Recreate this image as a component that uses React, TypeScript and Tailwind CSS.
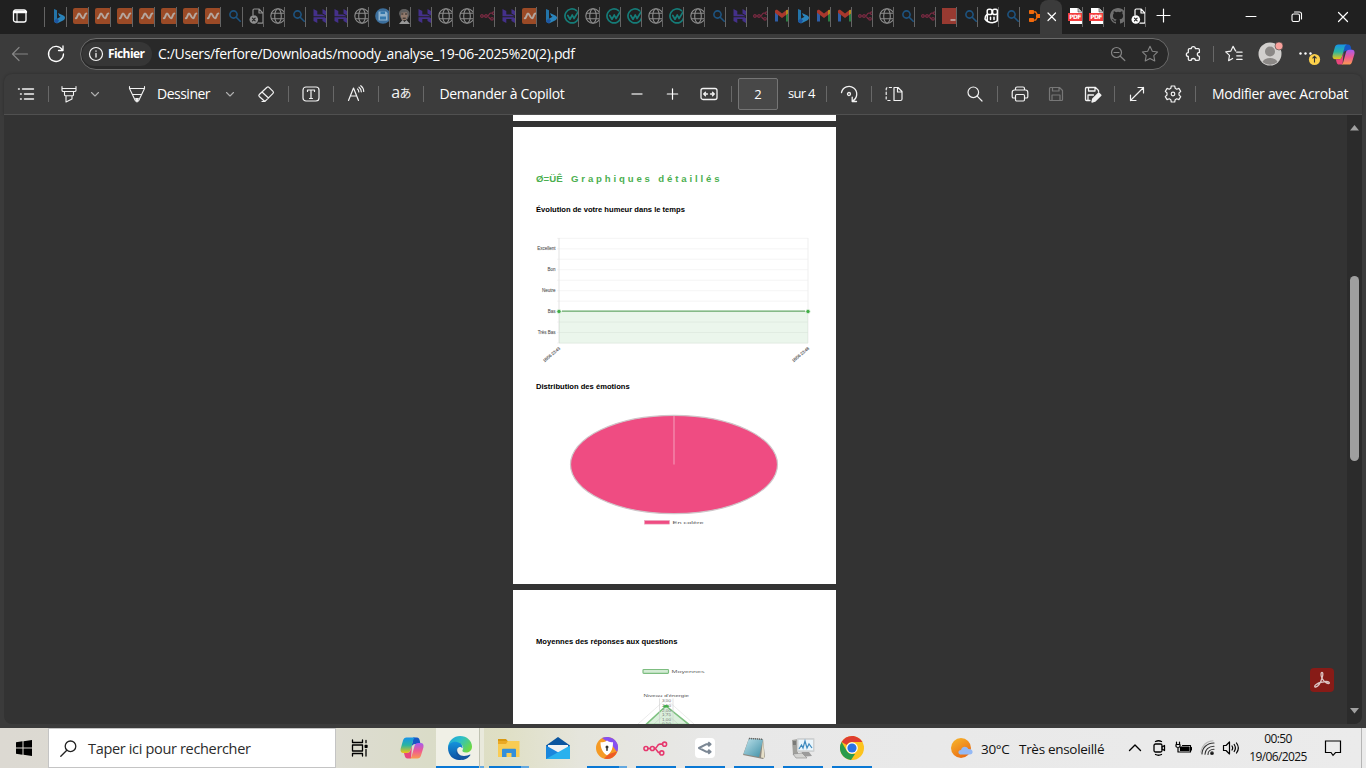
import React from "react";

type P = { children?: React.ReactNode; className?: string; s?: number; w?: number; vb?: string; c?: string };

/* Stroked icon on a 20-unit canvas */
const Ico = ({ children, s = 20, w = 1.2, vb = "0 0 20 20", c = "#f2f2f2", className = "" }: P) => (
  <svg width={s} height={s} viewBox={vb} fill="none" stroke={c} strokeWidth={w} strokeLinecap="round" strokeLinejoin="round" className={`shrink-0 ${className}`}>
    {children}
  </svg>
);

const Cell = ({ children, className = "" }: P) => (
  <div className={`flex h-full shrink-0 items-center justify-center ${className}`}>{children}</div>
);

const Sep = ({ className = "" }: P) => <div className={`h-4 w-px shrink-0 bg-[#686868] ${className}`} />;

/* ---------- tab strip ---------- */

const Bing = () => (
  <svg width="16" height="16" viewBox="0 0 16 16" className="shrink-0">
    <path d="M3 1l3 1.200v8.600L3 13z" fill="#2374a8" />
    <path d="M6 10.800l3.500-2-1.300-.8L7 5l5.300 2.500c1.200.6 1.800 1.500 1.700 2.500-.1 1-.6 1.700-1.500 2.200L7 15c-1.800.8-3.800-.2-4-2.200z" fill="#2a84bb" />
    <path d="M3 12.800l3-2 2 1.400-1.600 3C4.700 15.400 3.200 14.300 3 12.800z" fill="#1d55a0" />
  </svg>
);
const Namecheap = () => (
  <svg width="16" height="16" viewBox="0 0 16 16" className="shrink-0">
    <rect width="16" height="16" rx="2" fill="#9b4a26" />
    <path d="M2.800 10.200C4.500 10.400 4.500 5.600 6 5.600S8.400 10.300 10 10.300 11.500 5.600 13.300 5.600" fill="none" stroke="#b5a79f" strokeWidth="2" strokeLinecap="round" />
  </svg>
);
const Search = () => (
  <Ico s={16} vb="0 0 16 16" w={1.600} c="#1d5380">
    <circle cx="6.500" cy="6.500" r="3.600" />
    <path d="M9.200 9.200l4 4" />
  </Ico>
);
const FileX = ({ c = "#8f8f8f" }: P) => (
  <Ico s={16} vb="0 0 16 16" w={1.200} c={c}>
    <path d="M4 7V2.200C4 1.300 4.500 1 5.200 1H10l4 4v9c0 .700-.400 1.200-1.200 1.200H9M10 1v4h4" />
    <circle cx="4.800" cy="11.500" r="4.300" fill={c} stroke="none" />
    <path d="M3.500 10.200l2.600 2.600M6.100 10.200l-2.600 2.600" stroke="#202020" />
  </Ico>
);
const Globe = () => (
  <Ico s={16} vb="0 0 16 16" w={1.100} c="#8c8c8c">
    <circle cx="8" cy="8" r="7.200" />
    <ellipse cx="8" cy="8" rx="3.300" ry="7.200" />
    <path d="M1.500 5.300h13M1.500 10.700h13" />
  </Ico>
);
const Hosting = () => (
  <svg width="16" height="16" viewBox="0 0 16 16" className="shrink-0" fill="#44308a">
    <path d="M1.500 1l3.800 2v3.400h4.800L13.800 8.300H1.500zM10.500 1l3.500 2v4.400l-3.500-1.800z" />
    <path d="M1.500 9.200h11l1.500 1V15l-3.500-1.900v-2H5.300V15l-3.800-2z" />
  </svg>
);
const Disk = () => (
  <svg width="16" height="16" viewBox="0 0 16 16" className="shrink-0">
    <circle cx="8" cy="8" r="7.800" fill="#3c6f9d" />
    <path d="M3.500 3.500h7.500l1.500 1.500v7.500h-9z" fill="#8fb4d0" />
    <path d="M5.500 3.500h4.500V6H5.500zM5 8.500h6v3H5z" fill="#3679ad" />
  </svg>
);
const Face = () => (
  <svg width="16" height="16" viewBox="0 0 16 16" className="shrink-0">
    <path d="M3 6c0-3 2-5 5.200-5C12 1 14 3.500 13.500 7l-2 4.500-6 .500z" fill="#5e5e5e" />
    <path d="M5 4.800l6-.6.800 3.500L10 12l-3.300.400L5 9z" fill="#927a6c" />
    <path d="M5.300 6h2M9 6h2M6.700 10.200h3" stroke="#252525" />
    <path d="M3 16l3.500-4 2 2 2-2L14 16z" fill="#999" />
  </svg>
);
const N8n = ({ c = "#7a2a42", s = 16, w = 1.200 }: P) => (
  <Ico s={s} vb="0 0 16 16" w={w} c={c}>
    <circle cx="1.900" cy="8" r="1.300" />
    <circle cx="6" cy="8" r="1.300" />
    <circle cx="13.800" cy="5.200" r="1.300" />
    <circle cx="12" cy="10.800" r="1.300" />
    <path d="M3.200 8h1.500M7.300 8c2.300 0 1.300-2.800 3.400-2.800h1.800M7.300 8c2 0 1.300 2.800 3.400 2.800" />
  </Ico>
);
const Wave = () => (
  <Ico s={16} vb="0 0 16 16" w={1.700} c="#157c78">
    <path d="M12.500 2.600A7 7 0 1 0 14.800 9.500" />
    <path d="M3.800 7.500l2.200 3.800L8.300 7 10 10.500 15 2.500" />
  </Ico>
);
const Gmail = () => (
  <svg width="16" height="16" viewBox="0 0 16 16" className="shrink-0">
    <path d="M1 4v9.500h3V6.500z" fill="#2f5ea6" />
    <path d="M12 6.500v7h3V4z" fill="#2a7d41" />
    <path d="M1 3.200C1 1.800 2.500 1.300 3.500 2L8 5.400 12.500 2c1-.7 2.500-.2 2.500 1.200v1.500L8 10 1 4.700z" fill="#a8382d" />
    <path d="M12 2.400c1.500-1 3-.4 3 .8v1.500l-3 2.300z" fill="#b08a20" />
  </svg>
);
const RedSq = () => (
  <svg width="16" height="16" viewBox="0 0 16 16" className="shrink-0">
    <rect width="16" height="16" fill="#983a31" />
    <path d="M8.500 12h5" stroke="#c7b3b0" strokeWidth="1.500" />
  </svg>
);
const CopilotGh = () => (
  <Ico s={16} vb="0 0 16 16" w={1.500} c="#fff">
    <rect x="3.200" y="1.300" width="4.800" height="5.200" rx="1.800" />
    <rect x="8.600" y="1.300" width="4.800" height="5.200" rx="1.800" />
    <path d="M2.800 6.500C1.500 7.500 1 8.500 1 11c1.800 2.600 4.500 3.700 7.300 3.700s5-1.100 6.700-3.700c0-2.500-.5-3.500-1.200-4.500M3.300 7.500v5M13.300 7.500v5" />
    <path d="M6.500 9.300v2.200M10 9.300v2.200" />
  </Ico>
);
const Zap = () => (
  <svg width="16" height="16" viewBox="0 0 16 16" className="shrink-0" fill="#f26a0c">
    <rect x="0" y="2" width="5" height="4" rx=".8" />
    <rect x="0" y="10" width="5" height="4" rx=".8" />
    <rect x="7" y="6" width="5" height="4" rx=".8" />
    <path d="M5 3.200h2L8.800 6.200H7.500L6 4.600H5zM5 12.800h2l1.800-3H7.500L6 11.400H5z" />
  </svg>
);
const Pdf = () => (
  <svg width="16" height="16" viewBox="0 0 16 16" className="shrink-0">
    <path d="M2 0h8l4 4v12H2z" fill="#fff" />
    <path d="M10 0v4h4" fill="#c9c9c9" stroke="#202020" strokeWidth=".5" />
    <rect y="5" width="15" height="8" fill="#f43d3d" />
    <text x="7.300" y="11.300" fontSize="6" fontWeight="700" textAnchor="middle" textLength="12" fill="#fff" fontFamily="DejaVu Sans, sans-serif">PDF</text>
  </svg>
);
const Github = () => (
  <svg width="16" height="16" viewBox="0 0 16 16" className="shrink-0" fill="#6f6f6f">
    <path d="M8 0C3.580 0 0 3.580 0 8c0 3.540 2.290 6.530 5.470 7.590.4.070.55-.17.55-.38 0-.19-.01-.82-.01-1.490-2.010.37-2.530-.49-2.690-.94-.09-.23-.48-.94-.82-1.130-.28-.15-.68-.52-.01-.53.63-.01 1.080.58 1.230.82.72 1.210 1.870.87 2.330.66.07-.52.28-.87.51-1.070-1.780-.2-3.640-.89-3.640-3.950 0-.87.31-1.590.82-2.150-.08-.2-.36-1.020.08-2.120 0 0 .67-.21 2.200.82a7.420 7.420 0 0 1 4 0c1.530-1.040 2.200-.82 2.200-.82.44 1.100.16 1.920.08 2.120.51.56.82 1.270.82 2.150 0 3.070-1.870 3.750-3.650 3.950.29.25.54.73.54 1.480 0 1.070-.01 1.930-.01 2.200 0 .21.15.46.55.38A8.010 8.010 0 0 0 16 8c0-4.420-3.580-8-8-8z" />
  </svg>
);

const TABS = "b n n n n n n n s f g s h h g d a h g g 8 h n b w g w w g w g s h 8 m b m m 8 g s 8 r s c s".split(" ");
const ICONS: Record<string, React.ReactNode> = {
  b: <Bing />, n: <Namecheap />, s: <Search />, f: <FileX />, g: <Globe />, h: <Hosting />, d: <Disk />, a: <Face />,
  "8": <N8n />, w: <Wave />, m: <Gmail />, r: <RedSq />, c: <CopilotGh />, p: <Pdf />, k: <Github />, x: <FileX c="#fff" />,
};

const Tab = ({ k, wide }: { k: string; wide?: boolean }) => (
  <div className={`mt-[7px] flex h-5 shrink-0 items-center overflow-hidden border-r border-[#646464] pl-1.5 pb-0.5 ${wide ? "w-[22px]" : "w-[21px]"}`}>{ICONS[k]}</div>
);

const TabStrip = () => (
  <div className="flex h-[34px] bg-[#202020]">
    <div className="flex w-[45px] border-r border-transparent pl-[12px] pt-2">
      <Ico s={16} vb="0 0 16 16" w={1.300} c="#fff">
        <rect x="1.500" y="2" width="12.500" height="12" rx="2" />
        <path d="M2 4h12" strokeWidth="2.400" />
        <path d="M5 5v9" strokeWidth="1" />
      </Ico>
    </div>
    <div className="-ml-px mt-[7px] h-5 w-px bg-[#646464]" />
    {TABS.map((k, i) => (
      <Tab key={i} k={k} wide={i < 9} />
    ))}
    <div className="flex w-5 shrink-0 items-start overflow-hidden pl-[9px] pt-2"><Zap /></div>
    <div className="flex w-[22px] shrink-0 items-center justify-center rounded-t-lg bg-[#3b3b3b] pl-0.5">
      <Ico s={12} vb="0 0 12 12" c="#fff"><path d="M2 2l7.500 7.500M9.500 2L2 9.500" /></Ico>
    </div>
    <div className="flex">
      {["p", "p", "k", "x"].map((k, i) => <Tab key={i} k={k} />)}
    </div>
    <Cell className="ml-[7px] w-5 pb-1"><Ico s={16} vb="0 0 16 16" c="#fff"><path d="M8.500 2v13M2 8.500h13" /></Ico></Cell>
    <Cell className="ml-auto w-[46px]"><Ico s={12} vb="0 0 12 12" c="#fff"><path d="M1 5.500h10" strokeWidth="1" /></Ico></Cell>
    <Cell className="w-[46px]">
      <Ico s={12} vb="0 0 12 12" w={1.100} c="#fff"><rect x="1" y="3" width="7.500" height="7.500" rx="1.500" /><path d="M3.500 1h4.700C10 1 10.500 2 10.500 3v5" /></Ico>
    </Cell>
    <Cell className="w-[46px]"><Ico s={12} vb="0 0 12 12" c="#fff"><path d="M1.500 1.500l9 9M10.500 1.500l-9 9" /></Ico></Cell>
  </div>
);

/* ---------- Copilot ---------- */
const Copilot = ({ id, s = 24 }: { id: string; s?: number }) => (
  <svg width={s} height={s} viewBox="0 0 24 24" className="shrink-0">
    <defs>
      <linearGradient id={id + "a"} x1="0" y1="0" x2="0" y2="1">
        <stop offset="0" stopColor="#1693ea" /><stop offset=".5" stopColor="#2bb5a0" /><stop offset="1" stopColor="#f2c413" />
      </linearGradient>
      <linearGradient id={id + "b"} x1="0" y1="0" x2="0" y2="1">
        <stop offset="0" stopColor="#a45cf0" /><stop offset=".5" stopColor="#ee5a92" /><stop offset="1" stopColor="#fb9a51" />
      </linearGradient>
    </defs>
    <path d="M13 1.500h4c1.500 0 2.200 1 2.600 2.500L20.500 8h-5c-2.500 0-3.500 1.500-4 3l-1.500 5 3-12z" fill="#1657c4" />
    <path d="M6.500 1.500H16c-1.500 0-2.300 1-2.700 2.500L10.500 14c-.6 2-1.700 3-3.700 3H3.500C1 17 .1 15 .7 12.500L3 4.500C3.600 2.500 4.700 1.500 6.500 1.500z" fill={`url(#${id}a)`} />
    <path d="M11 22.500H7.500c-1.500 0-2.300-1-2.700-2.500L4 17h3c2 0 3-1 3.600-3l1.400-4z" fill="#e8467c" />
    <path d="M17.500 22.500H9c1.500 0 2.300-1 2.700-2.500l2.800-10c.6-2 1.700-3 3.500-3h2.700c2.500 0 3.300 2 2.700 4.500L21 19.500c-.6 2-1.700 3-3.500 3z" fill={`url(#${id}b)`} />
  </svg>
);

/* ---------- address bar ---------- */
const AddressBar = () => (
  <div className="flex h-10 items-center bg-[#3b3b3b]">
    <Cell className="w-10"><Ico c="#858585"><path d="M17.500 10H2.500M9 3.500L2.500 10 9 16.500" /></Ico></Cell>
    <Cell className="w-8"><Ico w={1.300} c="#fff"><path d="M16.500 6.200A7.500 7.500 0 1 0 17.500 10M17 2v4.500h-4.500" /></Ico></Cell>
    <div className="ml-2 flex h-8 w-[1089px] items-center rounded-full border border-[#6b6b6b] bg-[#292929] pl-px">
      <div className="flex h-6 w-[70px] items-center rounded-full bg-[#363636] pl-[6px]">
        <Ico s={16} vb="0 0 16 16" c="#f5f5f5"><circle cx="8" cy="8" r="6.500" /><path d="M8 7.500v3.500M8 5v.2" strokeWidth="1.300" /></Ico>
        <span className="ml-1 whitespace-nowrap text-[12px] font-bold tracking-[-0.6px] text-white">Fichier</span>
      </div>
      <span className="ml-[6px] whitespace-nowrap pb-px text-[14px] tracking-[-0.34px] text-white">C:/Users/ferfore/Downloads/moody_analyse_19-06-2025%20(2).pdf</span>
      <Cell className="ml-auto w-8"><Ico s={16} vb="0 0 16 16" c="#858585"><circle cx="6.500" cy="6.500" r="5" /><path d="M10.300 10.300l4.500 4.200M4 6.500h5" /></Ico></Cell>
      <Cell className="mr-[2px] w-8"><Ico s={18} c="#858585"><path d="M10 1.500l2.600 5.400 5.900.8-4.300 4.100 1.100 5.900L10 14.900l-5.300 2.800 1.100-5.900L1.500 7.700l5.900-.8z" /></Ico></Cell>
    </div>
    <Cell className="ml-[9px] w-8"><Ico s={18} w={1.400}><path d="M7 4c0-1.300 1-2.200 2.200-2.200S11.500 2.700 11.500 4h3.200c.7 0 1.300.6 1.300 1.300V8.300c-1.400 0-2.300.9-2.300 2.100s.9 2.200 2.300 2.200v3.100c0 .8-.6 1.300-1.300 1.300h-3.200c0-1.200-.9-2-2.200-2S7 15.800 7 17H5c-.8 0-1.300-.6-1.300-1.300v-3c-1.300 0-2.200-1-2.200-2.200s.9-2.100 2.200-2.100V5.300C3.700 4.600 4.300 4 5 4z" /></Ico></Cell>
    <Sep className="ml-[3px] bg-[#606060]" />
    <Cell className="ml-[2px] w-9"><Ico s={18}><path d="M12 6.500h-.3L9 1.500 6.500 6.800.8 7.600l4.200 4-1 5.800 4.500-2.500M13 8h6M13 12h6M13 16h6" strokeWidth="1.300" /></Ico></Cell>
    <Cell className="ml-[3px] w-8">
      <svg width="28" height="26" viewBox="0 0 28 26">
        <circle cx="13" cy="13" r="11.500" fill="#d1cfcd" />
        <circle cx="13" cy="10.500" r="5" fill="#8b8886" />
        <path d="M5.500 21c1.500-3 4-4 7.500-4s6 1 7.500 4A11.500 11.500 0 0 1 5.500 21z" fill="#8b8886" />
        <circle cx="22" cy="5" r="4" fill="#f9a19c" stroke="#3b3b3b" strokeWidth=".6" />
      </svg>
    </Cell>
    <Cell className="ml-[6px] w-8">
      <svg width="28" height="24" viewBox="0 0 28 24">
        <g fill="#fff"><circle cx="5.500" cy="11.500" r="1.200" /><circle cx="10.500" cy="11.500" r="1.200" /><circle cx="15.500" cy="11.500" r="1.200" /></g>
        <circle cx="19.500" cy="17.500" r="5.600" fill="#fcd04b" />
        <path d="M19.500 20.500v-6M17.500 16.300l2-2 2 2" fill="none" stroke="#333" strokeWidth="1.100" />
      </svg>
    </Cell>
    <Cell className="ml-[2px] w-8"><Copilot id="top" s={23} /></Cell>
  </div>
);

/* ---------- PDF toolbar ---------- */
const Chev = () => <Ico s={10} vb="0 0 10 10" c="#b0b0b0" w={1.100}><path d="M1.500 3.500L5 7l3.500-3.500" /></Ico>;
const T = ({ children, className = "" }: P) => <span className={`shrink-0 whitespace-nowrap text-white ${className}`}>{children}</span>;

const Toolbar = () => (
  <div className="flex h-[41px] items-center rounded-t-lg border-b border-[#505050] bg-[#3c3c3c] shadow-[0_0_3px_rgba(0,0,0,.25)]">
    <Cell className="w-11"><Ico w={1.400}><path d="M6.500 5h11M8.500 10h9M8.500 15h9M2.500 5h.8M4.500 10h.8M4.500 15h.8" /></Ico></Cell>
    <Sep />
    <Cell className="w-10"><Ico w={1.100}><path d="M3 2.500v3.700c0 .8.500 1.300 1.300 1.300h11.400c.8 0 1.300-.5 1.300-1.300V2.500M3 4.500h14M5.500 7.500v3.200c0 .6.400 1 1 1h7c.6 0 1-.4 1-1V7.500M7 12v6l6-3V12" /></Ico></Cell>
    <Cell className="w-3"><Chev /></Cell>
    <Cell className="ml-[18px] w-9"><Ico w={1.100}><path d="M2.500 2.500v2l6 12.500h3l6-12.500v-2M2.500 4.500h15M5.500 10.500h9" /><path d="M8.700 14.500h2.600L10 18z" fill="#f2f2f2" /></Ico></Cell>
    <T className="ml-0.5 w-[53px] pb-0.5 text-[14px] tracking-[-0.5px]">Dessiner</T>
    <Cell className="w-10"><Chev /></Cell>
    <Cell className="w-8"><Ico><path d="M11 3.300c.6-.6 1.400-.6 2 0l4 4c.6.600.600 1.400 0 2L10 16.300c-.8.800-1.700.8-2.500 0L3.300 12.500c-.6-.600-.6-1.400 0-2zM6 8l6.500 6M6 17.500h3" /></Ico></Cell>
    <Sep className="ml-1.5" />
    <Cell className="w-11"><Ico><rect x="2" y="3" width="16" height="14" rx="3" /><path d="M6.500 7.500V6h7v1.500M10 6v8.500M8.500 14.500h3" /></Ico></Cell>
    <Sep />
    <Cell className="w-11"><Ico><path d="M2.500 16.500L7.500 4l5 12.500M4.300 12h6.500M11.500 5c1 .8 1.300 1.700 1.300 3M13 3.200c1.500 1.200 2.300 2.600 2.300 4.600M14.800 1.700c2 1.500 2.900 3.300 2.900 5.800" /></Ico></Cell>
    <Sep />
    <Cell className="w-11"><span className="-mt-1 whitespace-nowrap text-[16px] tracking-[-0.8px] text-[#f2f2f2]">a<span className="text-[12px]">あ</span></span></Cell>
    <Sep />
    <T className="ml-[15.5px] w-[124.5px] pb-0.5 text-[14px] tracking-[-0.33px]">Demander à Copilot</T>
    <Cell className="ml-[55px] w-9"><Ico w={1.400} c="#d0d0d0"><path d="M5 10h10" /></Ico></Cell>
    <Cell className="w-[35px]"><Ico c="#fff"><path d="M9.500 4.800v10.400M4.300 10h10.400" /></Ico></Cell>
    <Cell className="w-[38px]"><Ico w={1.300}><rect x="2" y="4.500" width="16" height="11" rx="2" /><path d="M5 10h3.500M15 10h-3.500M6.500 8.200L4.700 10l1.800 1.800M13.500 8.200l1.800 1.800-1.800 1.800" /></Ico></Cell>
    <Sep className="ml-[3px]" />
    <div className="ml-1.5 flex h-8 w-10 shrink-0 items-center justify-center rounded-xs border border-[#757575] bg-[#484848] pt-px text-[13px] text-white">2</div>
    <T className="ml-2.5 w-[26px] text-[13px] tracking-[-0.7px]">sur 4</T>
    <Sep className="ml-3" />
    <Cell className="w-11"><Ico w={1.300}><path d="M2.500 8.500a7.700 7.700 0 1 1 11 8.500M17.500 17.500h-4.300v-4.300" /><circle cx="10" cy="10" r="1.500" /></Ico></Cell>
    <Sep />
    <Cell className="w-11"><Ico><path d="M10 3.500h4l4 4V15c0 1-.5 1.500-1.500 1.500H10zM13.500 3.500V8H18" /><path d="M7.500 3.500H4C3 3.500 2.200 4.300 2.200 5v10c0 .8.800 1.500 1.800 1.500h3.500" strokeDasharray="2.200 2.400" /></Ico></Cell>
    <Cell className="ml-[41px] w-9"><Ico><circle cx="8.300" cy="8.300" r="5.300" /><path d="M12.200 12.200L17 17" /></Ico></Cell>
    <Sep className="ml-1" />
    <Cell className="w-11"><Ico><path d="M5.500 6V4.500c0-1 .6-1.500 1.500-1.500h6c1 0 1.500.6 1.500 1.500V6M5 14H3.500c-.8 0-1.300-.5-1.300-1.300V8.500C2.200 7 3 6 4.500 6h11c1.500 0 2.300 1 2.300 2.500v4.200c0 .8-.5 1.300-1.300 1.300H15" /><rect x="5.500" y="10.500" width="9" height="6.500" rx="1.200" /></Ico></Cell>
    <Cell className="w-7"><Ico c="#777"><path d="M4.500 3.500h9l3 3v9c0 .6-.4 1-1 1h-11c-.6 0-1-.4-1-1v-11c0-.6.400-1 1-1zM6.500 3.500V7h6.500V3.500M6 16.500V11h8v5.500" /></Ico></Cell>
    <Cell className="ml-2 w-7"><Ico w={1.300}><path d="M8 16.500H4.500c-.6 0-1-.4-1-1v-11c0-.6.400-1 1-1h9l3 3V8M6.500 3.500V7h6.500V3.500M6 16.500V11h5.500" /><path d="M10 18l.7-3 6-6 2.200 2.200-6 6z" fill="#f2f2f2" /></Ico></Cell>
    <Sep className="ml-2" />
    <Cell className="w-11"><Ico><path d="M3.500 16.500l13-13M11 3.500h5.500V9M3.500 11v5.500H9" /></Ico></Cell>
    <Cell className="w-7">
      <Ico>
        <path d="M8.300 2h3.400l.5 2.300 1.500.9 2.200-.8 1.800 3-1.700 1.600v2l1.700 1.600-1.800 3-2.200-.8-1.500.9-.5 2.300H8.300l-.5-2.300-1.500-.9-2.200.8-1.800-3L4 11V9L2.300 7.400l1.800-3 2.200.8 1.500-.9z" />
        <circle cx="10" cy="10" r="1.800" />
      </Ico>
    </Cell>
    <Sep className="ml-2" />
    <T className="ml-4 pb-0.5 text-[14px] tracking-[-0.3px]">Modifier avec Acrobat</T>
  </div>
);

/* ---------- document ---------- */
const H3 = ({ children, className = "" }: P) => (
  <h3 className={`ml-[23px] h-5 whitespace-nowrap font-['Liberation_Sans',sans-serif] text-[7.600px] leading-5 font-bold text-black ${className}`}>{children}</h3>
);

const LABELS: [string, number][] = [["Excellent", 248.500], ["Bon", 269.500], ["Neutre", 290.500], ["Bas", 311.500], ["Très Bas", 332.500]];
const GRID = [238.300, 248.800, 259.200, 269.700, 280.200, 290.700, 301.100, 311.600, 322, 332.500, 343];

const LineChart = () => (
  <svg width="323" height="144" viewBox="513 228 323 144" className="mt-2 block font-['Liberation_Sans',sans-serif]">
    {GRID.map((y) => <path key={y} d={`M557 ${y}H808`} stroke="#f1f1f1" strokeWidth=".8" />)}
    <path d="M559 238v105" stroke="#e0e0e0" strokeWidth=".9" />
    <path d="M808 238v105" stroke="#ededed" strokeWidth=".9" />
    <rect x="559" y="311" width="249" height="32.500" fill="#4caf50" fillOpacity=".11" />
    <path d="M562 311.200h243" stroke="#67a96a" strokeWidth="1.300" />
    {[559, 808].map((x) => <circle key={x} cx={x} cy="311.500" r="2.100" fill="#3fae45" stroke="#d9ecd9" strokeWidth=".8" />)}
    {LABELS.map(([t, y]) => <text key={t} x="555.500" y={y + 1.300} fontSize="4.500" textAnchor="end" fill="#555" stroke="#555" strokeOpacity=".35" strokeWidth=".25">{t}</text>)}
    <text transform="translate(560.500 349) rotate(-40)" fontSize="4.300" textAnchor="end" textLength="21" fill="#444" stroke="#444" strokeOpacity=".35" strokeWidth=".25">18/06 23:43</text>
    <text transform="translate(809.500 349) rotate(-40)" fontSize="4.300" textAnchor="end" textLength="21" fill="#444" stroke="#444" strokeOpacity=".35" strokeWidth=".25">18/06 23:48</text>
  </svg>
);

const PieChart = () => (
  <svg width="323" height="139" viewBox="513 401 323 139" className="mt-1 block font-['Liberation_Sans',sans-serif]">
    <ellipse cx="674" cy="464.500" rx="103.500" ry="49.200" fill="#ef4c82" stroke="#cfc4c8" strokeWidth="1.200" />
    <path d="M674 416v48.500" stroke="#f493b3" strokeWidth="1.200" />
    <rect x="644.500" y="520.500" width="25" height="3.600" fill="#ef4c82" stroke="#e8a9be" strokeWidth=".6" />
    <text x="672.500" y="523.600" fontSize="4.200" textLength="31" lengthAdjust="spacingAndGlyphs" fill="#555">En colère</text>
  </svg>
);

const RadarChart = () => (
  <svg width="323" height="72" viewBox="513 652 323 72" className="block font-['Liberation_Sans',sans-serif]">
    <rect x="643" y="669.500" width="25.500" height="3.800" rx=".8" fill="#d3ebd4" stroke="#7dbd80" strokeWidth="1.200" />
    <text x="671.500" y="672.700" fontSize="4.200" textLength="33" lengthAdjust="spacingAndGlyphs" fill="#666">Moyennes</text>
    <text x="643.500" y="697.300" fontSize="4" textLength="45.500" lengthAdjust="spacingAndGlyphs" fill="#555">Niveau d'énergie</text>
    <path d="M666 699L638 724M666 699l28 25M666 713l-12 11M666 713l12 11" fill="none" stroke="#e2e2e2" strokeWidth=".7" />
    <path d="M666 706L646 724.500h43z" fill="#4caf50" fillOpacity=".2" stroke="#7dc180" strokeWidth="1.600" />
    <path d="M659.500 698.500V724M673 698.500V724" stroke="#cdcdcd" strokeWidth=".6" />
    {["3,00", "2,50", "2,00", "1,75", "1,00", "0,50"].map((t, i) => (
      <text key={t} x="666.500" y={702.400 + i * 4.600} fontSize="3.600" textAnchor="middle" textLength="9" lengthAdjust="spacingAndGlyphs" fill="#777">{t}</text>
    ))}
    <ellipse cx="666" cy="706.200" rx="3" ry="1.300" fill="#44ad49" />
  </svg>
);

const Viewer = () => (
  <div className="flex h-[609px] overflow-hidden rounded-b-lg bg-[#333]">
    <div className="flex min-w-0 flex-1 pl-[509px]">
      <div className="flex w-[323px] shrink-0 flex-col gap-1.5 overflow-hidden">
        <div className="h-1.5 shrink-0 bg-white" />
        <div className="h-[457px] shrink-0 bg-white pt-[41px]">
          <h2 className="ml-[23px] flex h-5 whitespace-nowrap font-['Liberation_Sans',sans-serif] text-[9.600px] leading-[21px] font-bold text-[#4caf50]">
            <span className="w-[35px] tracking-[0.1px]">Ø=ÜÊ</span>
            <span className="tracking-[2.850px]">Graphiques détaillés</span>
          </h2>
          <H3 className="mt-3">Évolution de votre humeur dans le temps</H3>
          <LineChart />
          <H3 className="mt-[5px]">Distribution des émotions</H3>
          <PieChart />
        </div>
        <div className="h-[134px] shrink-0 bg-white pt-[42px]">
          <H3>Moyennes des réponses aux questions</H3>
          <RadarChart />
        </div>
      </div>
      <div className="mr-[13px] mb-8 ml-auto flex size-6 items-center justify-center self-end rounded bg-[#871b17]">
        <Ico s={18} vb="0 0 18 18" w={1.300} c="#ddc5c4">
          <path d="M8.700 6.500C7.500 3.500 8 1.500 9 1.500s1.200 2 .2 5C8 10.500 5.500 15.500 2.800 16c-1.500.2-1.500-1.300.3-2.500C6 11.500 10 10.600 13.500 10.500c2.200 0 3 .7 2.800 1.500-.4 1.500-5-.3-7.300-4.800" />
        </Ico>
      </div>
    </div>
    <div className="flex w-[15px] flex-col items-center bg-[#2b2b2b]">
      <svg width="9" height="6" viewBox="0 0 9 6" className="mt-2.5 shrink-0"><path d="M4.500 0L9 5.500H0z" fill="#a0a0a0" /></svg>
      <div className="mt-[145px] h-[185px] w-[9px] shrink-0 rounded-full bg-[#9f9f9f]" />
      <svg width="9" height="6" viewBox="0 0 9 6" className="mt-auto mb-[10px] shrink-0"><path d="M4.500 5.500L9 0H0z" fill="#a0a0a0" /></svg>
    </div>
  </div>
);

/* ---------- taskbar ---------- */
const TaskApp = ({ children, line }: { children: React.ReactNode; line?: "full" | "split" }) => (
  <div className="flex h-full w-[49px] shrink-0 flex-col items-center">
    <div className="flex flex-1 items-center pt-0.5">{children}</div>
    <div className="flex h-0.5 w-10">
      {line && <div className={`h-full bg-[#0a78d4] ${line === "full" ? "w-10" : "w-8"}`} />}
      {line === "split" && <div className="h-full w-2 bg-[#62a8e0]" />}
    </div>
  </div>
);

const Edge = () => (
  <svg width="24" height="24" viewBox="0 0 24 24">
    <defs>
      <linearGradient id="eg" x1="0" y1="0" x2="1" y2=".6"><stop offset="0" stopColor="#1ba0e0" /><stop offset=".5" stopColor="#2fc0c4" /><stop offset="1" stopColor="#6bd845" /></linearGradient>
      <linearGradient id="eb" x1="0" y1="0" x2="0" y2="1"><stop offset="0" stopColor="#1494dd" /><stop offset="1" stopColor="#0c4fa0" /></linearGradient>
    </defs>
    <path d="M0 11C1 4 6 0 12 0c7 0 12 5 12 10.500 0 4-3 6-6 6-3 0-4-1.200-3.500-2.200C17 10 12.500 7 8 7 4 7 1 9 0 12z" fill="url(#eg)" />
    <path d="M0 12c.5-5 5-7 9-6 4 .8 6 3.500 5.500 6.500-1.200-2-3.500-2-5 0C7 16 11 21 17 22c-2 1.500-4 2-6 2C5 24 0 19 0 12z" fill="url(#eb)" />
    <path d="M9.300 12.500c-1 4 2.200 7.500 6.700 7.500 2.500 0 4.500-.8 6-1.500.5 0 .6.300.3.800C21 21.500 18 23.500 15 24 10 23 6 17.500 9.300 12.500z" fill="#1456a0" />
  </svg>
);
const Folder = () => (
  <svg width="24" height="24" viewBox="0 0 24 24">
    <path d="M1 3h8l2 2.500H1z" fill="#d9980f" /><path d="M1 5h21.500v16H1z" fill="#f9cc54" /><path d="M1 5h10L9 8H1z" fill="#eba924" />
    <path d="M5 21v-7c0-.8.500-1.200 1.200-1.200h11.600c.8 0 1.200.4 1.200 1.200v7h-4.500v-4h-5v4z" fill="#338fdb" />
  </svg>
);
const Mail = () => (
  <svg width="24" height="24" viewBox="0 0 24 24">
    <path d="M0 9.500L12 1l12 8.500V20H0z" fill="#0b559f" /><path d="M2 9h20v3l-10 6L2 12z" fill="#f2f2f2" />
    <path d="M0 9.500V23h24z" fill="#1a86dc" /><path d="M24 9.500V23H0z" fill="#29b1ee" />
  </svg>
);
const Shield = () => (
  <svg width="24" height="24" viewBox="0 0 24 24">
    <circle cx="12" cy="12" r="11" fill="#f59a24" />
    <path d="M7 2C13-.5 20 2 22.500 8c1 3 .5 6-.5 8L17 9z" fill="#8650f0" />
    <path d="M22.200 15.500A11 11 0 0 1 9 22.600l5-4.600z" fill="#ed5b26" />
    <path d="M12 4.500c2 1.500 4 1.700 6 1.700 0 6-1.500 10.500-6 13-4.500-2.500-6.500-7-6.500-13 2.500 0 4.500-.2 6.500-1.700z" fill="#fff" />
    <circle cx="12" cy="11" r="1.500" fill="#333" /><path d="M11.400 11.500h1.200l.3 3.200h-1.800z" fill="#333" />
  </svg>
);
const Arrows = () => (
  <svg width="22" height="22" viewBox="0 0 22 22">
    <rect x="1" y="1" width="20" height="20" rx="4" fill="#fff" />
    <path d="M16 7.200h-3.500L5 11l7.500 3.800H16M14.200 5.200l2.400 2-2.400 2M14.200 12.800l2.400 2-2.400 2" fill="none" stroke="#7b8794" strokeWidth="2" strokeLinejoin="round" />
  </svg>
);
const Notepad = () => (
  <svg width="24" height="24" viewBox="0 0 24 24">
    <defs><linearGradient id="np" x1="0" y1="0" x2="1" y2="1"><stop offset="0" stopColor="#bfe3ec" /><stop offset="1" stopColor="#3f8fa6" /></linearGradient></defs>
    <path d="M7 2l14 1 2 18-2 2-20-4z" fill="#8c8880" /><path d="M21 3l1.500 19-3.500-.5z" fill="#e6dfc8" />
    <path d="M7 2.500l14 1L17 21 1.500 18z" fill="url(#np)" /><path d="M7 2.500l14 .8" stroke="#666" strokeWidth="1.500" strokeDasharray="1 1" />
  </svg>
);
const Monitor = () => (
  <svg width="24" height="24" viewBox="0 0 24 24">
    <path d="M1 4l6-1v17l-5-1z" fill="#a0a09c" /><path d="M2 6h3M2 8h3" stroke="#555" />
    <rect x="6" y="2" width="17.500" height="14" rx="1" fill="#cfd1d2" /><rect x="7.500" y="3.800" width="14.500" height="10.500" fill="#eaf5fb" />
    <path d="M8 13l2.500-4 1.500 3 2-7 2 7 2-4 3 4" fill="none" stroke="#3e8bbf" strokeWidth="1.200" />
    <path d="M11 16h7l3 4-12 1z" fill="#9b9b9b" /><path d="M2 18l9-1 5 5H5z" fill="#d4d4d2" stroke="#888" strokeWidth=".6" />
  </svg>
);
const Chrome = () => (
  <svg width="24" height="24" viewBox="0 0 24 24">
    <circle cx="12" cy="12" r="12" fill="#fcc31e" />
    <path d="M12 0c4.400 0 8.300 2.400 10.400 6H12a6 6 0 0 0-5.200 3L1.600 6A12 12 0 0 1 12 0z" fill="#df3e31" />
    <path d="M1.600 6l5.200 9A6 6 0 0 0 12 18l3 0-4 6A12 12 0 0 1 1.600 6z" fill="#2a9b4b" />
    <circle cx="12" cy="12" r="5.800" fill="#fff" /><circle cx="12" cy="12" r="4.600" fill="#2a72e4" />
  </svg>
);

const Taskbar = () => (
  <div className="flex h-10 items-center bg-[linear-gradient(90deg,#dcd9d2_0px,#dddcd2_330px,#dadcc8_430px,#dfdfc4_500px,#e5e5dc_580px,#e8e8e8_720px,#ebebeb_1366px)] text-black">
    <Cell className="w-12">
      <svg width="16" height="16" viewBox="0 0 16 16"><path d="M0 2.300L6.500 1.300V7.500H0zM7.500 1.200L16 0v7.500H7.500zM0 8.500h6.500v6.200L0 13.700zM7.500 8.500H16V16l-8.500-1.200z" /></svg>
    </Cell>
    <div className="flex h-full w-[288px] shrink-0 items-center border border-[#c4c4c4] bg-white pl-[11px]">
      <Ico s={17} vb="0 0 17 17" w={1.300} c="#222"><circle cx="10.500" cy="6.300" r="5.300" /><path d="M6.800 10.200L.8 16.200" /></Ico>
      <span className="ml-[11px] whitespace-nowrap pt-0.5 text-[14.500px] tracking-[-0.33px] text-[#2b2b2b]">Taper ici pour rechercher</span>
    </div>
    <Cell className="w-12">
      <Ico s={18} vb="0 0 18 18" w={1.300} c="#000"><path d="M1.500 1v2.500h10V1M1.500 17v-2.500h10V17M1.500 6h10v6h-10zM15 1.500v2.200M15 10.500V17" /><rect x="14.200" y="6.500" width="1.800" height="1.800" fill="#000" /></Ico>
    </Cell>
    <Cell className="ml-[3px] w-[49px]"><Copilot id="task" /></Cell>
    <div className="flex h-full w-[44px] shrink-0 flex-col items-center border-r border-[#c0c2b2] bg-[#f0f0e6]">
      <div className="flex flex-1 items-center pt-0.5 pl-[4px]"><Edge /></div>
      <div className="h-0.5 w-full bg-[#0a78d4]" />
    </div>
    <div className="flex h-full w-1 shrink-0 flex-col justify-end bg-[#e9e9dc]"><div className="h-0.5 bg-[#62a8e0]" /></div>
    <TaskApp line="split"><Folder /></TaskApp>
    <TaskApp><Mail /></TaskApp>
    <TaskApp line="split"><Shield /></TaskApp>
    <TaskApp line="full"><N8n c="#e6386e" s={25} w={1} /></TaskApp>
    <TaskApp line="full"><Arrows /></TaskApp>
    <TaskApp line="full"><Notepad /></TaskApp>
    <TaskApp line="full"><Monitor /></TaskApp>
    <TaskApp line="full"><Chrome /></TaskApp>
    <div className="ml-[74px] flex shrink-0 items-center">
      <svg width="24" height="22" viewBox="0 0 24 22">
        <defs><linearGradient id="sun" x1="0" y1="0" x2=".6" y2="1"><stop offset="0" stopColor="#f7b92d" /><stop offset="1" stopColor="#ea6d14" /></linearGradient></defs>
        <circle cx="11" cy="11" r="10" fill="url(#sun)" />
        <path d="M11.500 17.500c-4 0-4-4.500-.5-4.600 1-4 6-4 7.300-.9 5.500-.2 5.500 5.500 1.500 5.500z" fill="#94b9f5" />
      </svg>
    </div>
    <span className="ml-[7px] w-[38px] shrink-0 whitespace-nowrap pt-0.5 text-[13.500px] tracking-[-0.3px] text-[#111]">30°C</span>
    <span className="w-[86px] shrink-0 whitespace-nowrap pt-0.5 text-[13.500px] tracking-[-0.3px] text-[#111]">Très ensoleillé</span>
    <Cell className="ml-[18px] w-6"><Ico s={14} vb="0 0 14 14" w={1.400} c="#000"><path d="M1.500 9.500L7 4l5.500 5.500" /></Ico></Cell>
    <Cell className="w-6"><Ico s={16} vb="0 0 16 16" w={1.300} c="#000"><rect x="3" y="4" width="8" height="8" rx="1.500" /><path d="M11 7l2.500-1.500v5L11 9M4.500 1.500c2-1 4-1 6 0M4.500 14.500c2 1 4 1 6 0" /></Ico></Cell>
    <Cell className="w-6">
      <Ico s={17} vb="0 0 17 17" w={1.200} c="#000"><path d="M1.500 2v2M4.500 2v2M1 4.500h4v1.500C5 7 4 7.500 3 7.500S1 7 1 6zM3 7.500v4.500h12.500V5.500h-8M16.500 7.500v2.500" /><rect x="5.500" y="7" width="8.500" height="3.500" fill="#000" /></Ico>
    </Cell>
    <Cell className="ml-px w-6">
      <Ico s={16} vb="0 0 16 16" w={1.100} c="#333"><path d="M2 14C2 8 7 3 14 3M5 14.300C5 10 8.500 6.200 14 6.200M8 14.500c0-3 2.500-5.200 6-5.200" /><circle cx="12" cy="13.200" r="1.300" fill="#000" /><path d="M.8 12C1.500 6 6.500 1 13 .8" stroke="#bbb" /></Ico>
    </Cell>
    <Cell className="w-[22px]"><Ico s={18} vb="0 0 18 18" w={1.200} c="#000"><path d="M1.500 6.500H4L7.500 3v12L4 11.500H1.500zM10 7c.8 1.200.8 2.800 0 4M12.200 5.500c1.500 2.200 1.500 4.800 0 7M14.500 4c2.200 3 2.200 7 0 10" /></Ico></Cell>
    <div className="ml-[2px] flex w-[68px] shrink-0 flex-col items-center text-[12px] leading-[18px] tracking-[-0.6px] text-[#111]"><span>00:50</span><span>19/06/2025</span></div>
    <Cell className="w-[42px]"><Ico s={18} vb="0 0 18 18" w={1.200} c="#000"><path d="M1.500 2h15v11.500h-5L9 16.300 7 13.500H1.500z" strokeLinejoin="miter" /></Ico></Cell>
    <div className="ml-auto h-full w-[5px] border-l border-[#b5b5b5]" />
  </div>
);

export default function App() {
  return (
    <div className="flex h-[768px] w-[1366px] flex-col overflow-hidden bg-[#3b3b3b] font-['Open_Sans','Noto_Sans_CJK_JP',sans-serif]">
      <TabStrip />
      <AddressBar />
      <div className="h-[654px] px-1 pb-1">
        <Toolbar />
        <Viewer />
      </div>
      <Taskbar />
    </div>
  );
}
